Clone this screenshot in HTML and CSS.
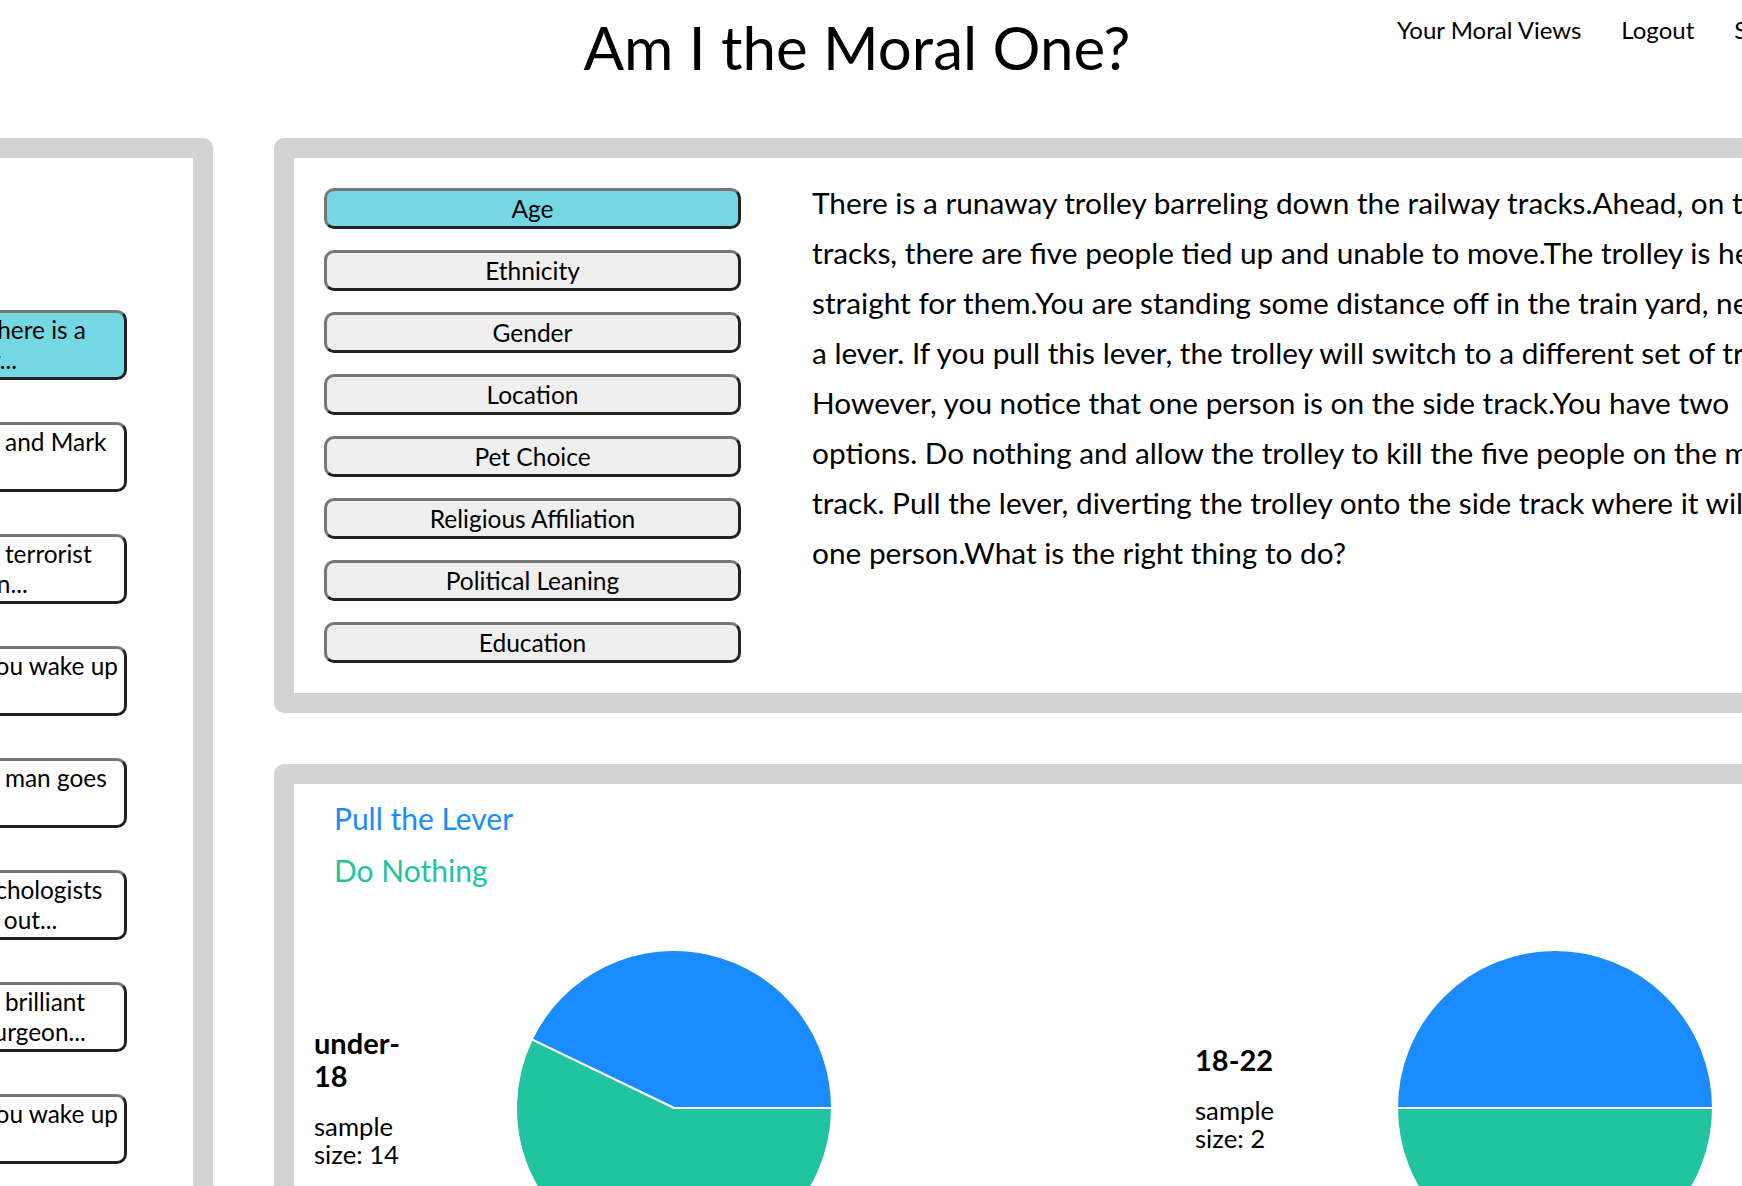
FILE: index.html
```html
<!DOCTYPE html>
<html lang="en">
<head>
<meta charset="utf-8">
<title>Am I the Moral One?</title>
<link rel="stylesheet" href="styles.css">
</head>
<body>
<header class="topbar">
  <div class="brand"><h1 class="title">Am I the Moral One?</h1></div>
  <nav class="nav">
    <a href="#">Your Moral Views</a>
    <a href="#">Logout</a>
    <a href="#">Submit a Dilemma</a>
  </nav>
</header>
<div class="layout">
  <aside class="sidebar">
    <div class="dilemma active">There is a<br>tr...</div>
    <div class="dilemma">J. and Mark</div>
    <div class="dilemma">A terrorist<br>on...</div>
    <div class="dilemma">You wake up</div>
    <div class="dilemma">A man goes</div>
    <div class="dilemma">ychologists<br>it out...</div>
    <div class="dilemma">A brilliant<br>surgeon...</div>
    <div class="dilemma">You wake up</div>
    <div class="dilemma">A doctor has</div>
  </aside>
  <main class="content">
    <section class="panel question">
      <div class="filters">
        <button class="filter active">Age</button>
        <button class="filter">Ethnicity</button>
        <button class="filter">Gender</button>
        <button class="filter">Location</button>
        <button class="filter">Pet Choice</button>
        <button class="filter">Religious Affiliation</button>
        <button class="filter">Political Leaning</button>
        <button class="filter">Education</button>
      </div>
      <p class="scenario">There is a runaway trolley barreling down the railway tracks.Ahead, on the<br>tracks, there are five people tied up and unable to move.The trolley is headed<br>straight for them.You are standing some distance off in the train yard, next to<br>a lever. If you pull this lever, the trolley will switch to a different set of tracks.<br>However, you notice that one person is on the side track.You have two<br>options. Do nothing and allow the trolley to kill the five people on the main<br>track. Pull the lever, diverting the trolley onto the side track where it will kill<br>one person.What is the right thing to do?</p>
    </section>
    <section class="panel results">
      <ul class="legend">
        <li class="pull">Pull the Lever</li>
        <li class="nothing">Do Nothing</li>
      </ul>
      <div class="charts">
        <div class="chart">
          <div class="chart-label">
            <h3>under-18</h3>
            <p>sample size: 14</p>
          </div>
          <svg class="pie" viewBox="0 0 318 318">
            <path class="slice-pull" d="M159 159 L317 159 A158 158 0 0 0 16.64 90.45 Z"/>
            <path class="slice-nothing" d="M159 159 L16.64 90.45 A158 158 0 1 0 317 159 Z"/>
          </svg>
        </div>
        <div class="chart">
          <div class="chart-label">
            <h3>18-22</h3>
            <p>sample size: 2</p>
          </div>
          <svg class="pie" viewBox="0 0 318 318">
            <path class="slice-pull" d="M159 159 L317 159 A158 158 0 0 0 1 159 Z"/>
            <path class="slice-nothing" d="M159 159 L1 159 A158 158 0 0 0 317 159 Z"/>
          </svg>
        </div>
      </div>
    </section>
  </main>
</div>
</body>
</html>
```

FILE: styles.css
```css
html, body {
  margin: 0;
  overflow: hidden;
  background: #fff;
}
body {
  font-family: Lato, "Open Sans", sans-serif;
  color: #000;
  width: 1742px;
  height: 1186px;
}

/* header */
.topbar {
  display: flex;
  align-items: flex-start;
  height: 138px;
  box-sizing: border-box;
  padding-top: 11px;
  white-space: nowrap;
}
.brand {
  flex: none;
  width: 1714px;
  margin-right: -317px;
  text-align: center;
}
.title {
  margin: 0;
  font-size: 60px;
  font-weight: 400;
  line-height: 1.2;
}
.nav {
  display: flex;
  gap: 40px;
  margin-top: 5px;
  font-size: 24px;
  line-height: 1.2;
}
.nav a {
  color: #000;
  text-decoration: none;
}

/* layout */
.layout {
  display: flex;
  align-items: flex-start;
  gap: 61px;
  margin-left: -75px;
}

.sidebar {
  flex: none;
  width: 288px;
  box-sizing: border-box;
  border: 20px solid #d3d3d3;
  border-radius: 10px;
  padding: 152px 66px 40px 30px;
  display: flex;
  flex-direction: column;
  gap: 42px;
  background: #fff;
}
.dilemma {
  height: 70px;
  box-sizing: border-box;
  border: 3px solid;
  border-color: #777 #222 #222 #777;
  border-radius: 10px;
  padding: 2px 10px 2px 5px;
  font-size: 24.4px;
  line-height: 30px;
  white-space: nowrap;
  overflow: hidden;
  background: #fff;
}
.dilemma.active {
  background: #73d8e4;
}

.content {
  flex: none;
  width: 1700px;
  display: flex;
  flex-direction: column;
  gap: 51px;
}
.panel {
  border: 20px solid #d3d3d3;
  border-radius: 10px;
  background: #fff;
}

/* question panel */
.question {
  display: flex;
  align-items: flex-start;
  gap: 71px;
  padding: 30px;
}
.filters {
  flex: none;
  width: 417px;
  display: flex;
  flex-direction: column;
  gap: 21px;
}
.filter {
  height: 41px;
  box-sizing: border-box;
  border: 3px solid;
  border-color: #777 #222 #222 #777;
  border-radius: 10px;
  background: #efefef;
  font-family: inherit;
  font-size: 24.5px;
  line-height: 35px;
  padding: 0;
  color: #000;
  text-align: center;
}
.filter.active {
  background: #73d8e4;
}
.scenario {
  margin: -10px 0 0;
  font-size: 29.8px;
  line-height: 50px;
  white-space: nowrap;
}

/* results panel */
.results {
  padding: 8px 0 80px;
}
.legend {
  list-style: none;
  margin: 0;
  padding: 0 0 0 40px;
  font-size: 30px;
  line-height: 52px;
}
.legend .pull { color: #1a8cff; }
.legend .nothing { color: #20c4a0; }

.charts {
  display: flex;
  margin-top: 53px;
  padding-left: 20px;
}
.chart {
  flex: none;
  width: 881px;
  display: flex;
  align-items: center;
  gap: 106px;
}
.chart-label {
  flex: none;
  width: 95px;
  padding-bottom: 22px;
}
.chart-label h3 {
  margin: 0;
  font-size: 29px;
  line-height: 33px;
  font-weight: 700;
}
.chart-label p {
  margin: 20px 0 0;
  font-size: 25.7px;
  line-height: 28px;
}
.pie {
  flex: none;
  display: block;
  width: 318px;
  height: 318px;
}
.pie path {
  stroke: #fff;
  stroke-width: 2;
  stroke-linejoin: round;
}
.slice-pull { fill: #1a8cff; }
.slice-nothing { fill: #20c4a0; }
```
